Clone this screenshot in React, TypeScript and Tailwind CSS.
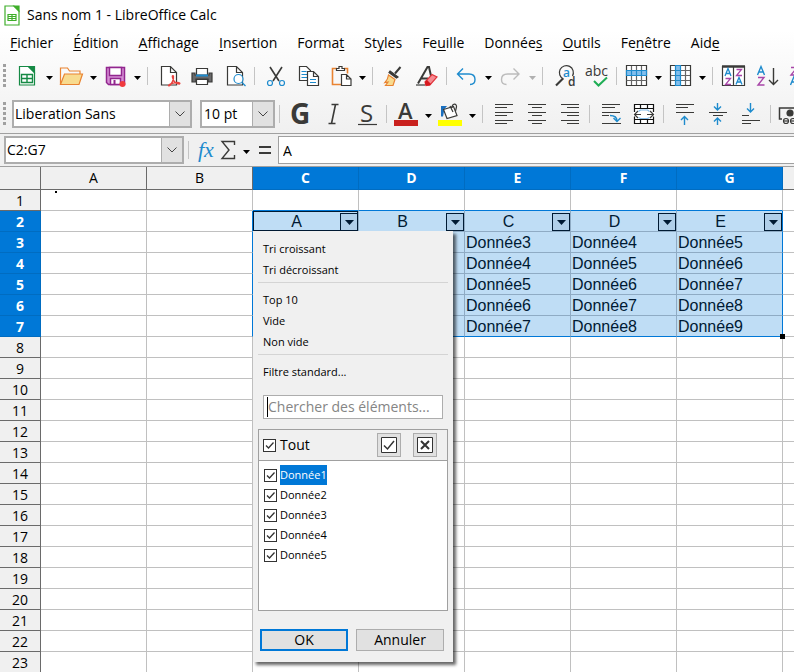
import React, { ReactNode, useState } from "react";

const COLUMNS = ["A", "B", "C", "D", "E", "F", "G"];
const ROWS = Array.from({ length: 23 }, (_, index) => index + 1);
const MENUS = [
  ["", "F", "ichier"],
  ["", "É", "dition"],
  ["", "A", "ffichage"],
  ["", "I", "nsertion"],
  ["Forma", "t", ""],
  ["St", "y", "les"],
  ["Fe", "u", "ille"],
  ["Donnée", "s", ""],
  ["", "O", "utils"],
  ["Fe", "n", "être"],
  ["Aid", "e", ""],
];

const DARK = "#3a3a38";
const BLUE = "#1e8bcd";

function Tool({ label, children }: { label: string; children: ReactNode }) {
  return (
    <button type="button" aria-label={label} className="w-[33px] h-6 shrink-0">
      <svg
        viewBox="0 0 33 24"
        className="block w-[33px] h-6 overflow-visible"
        fill="none"
        stroke={DARK}
        strokeWidth="1.2"
      >
        {children}
      </svg>
    </button>
  );
}

function Arrow({ label, disabled }: { label: string; disabled?: boolean }) {
  return (
    <button
      type="button"
      aria-label={label}
      disabled={disabled}
      className="w-[11px] h-6 shrink-0 flex items-center justify-center text-black disabled:text-[#b0b0b0]"
    >
      <svg viewBox="0 0 7 4" className="w-[7px] h-1 mt-1" fill="currentColor">
        <path d="M0 0h7L3.500 4z" />
      </svg>
    </button>
  );
}

function Separator() {
  return (
    <span className="w-2 shrink-0 flex justify-center">
      <span className="w-px h-[18px] bg-[#c4c4c4]" />
    </span>
  );
}

function Grip() {
  return (
    <span className="w-[3px] h-6 ml-[3px] shrink-0 bg-[repeating-linear-gradient(to_bottom,#a0a0a0_0_3px,transparent_3px_5px)]" />
  );
}

function Chevron() {
  return (
    <span className="w-[21px] shrink-0 bg-[#e1e1e1] border-l border-[#adadad] flex items-center justify-center pointer-events-none">
      <svg viewBox="0 0 10 6" className="w-2.5 h-1.5" fill="none" stroke="#444">
        <path d="M.5.5 5 5l4.500-4.500" />
      </svg>
    </span>
  );
}

function Page() {
  return <path d="M10.500 2.500h9l6 6v12.500h-15zM19.500 2.500v6h6" fill="#fff" />;
}

function StandardBar() {
  return (
    <div className="flex items-center h-[39px]">
      <Grip />
      <span className="w-[5px] shrink-0" />
      <Tool label="Nouveau">
        <g stroke="#168a45">
          <path d="M8.500 2.500h9l6 6v12.500h-15z" fill="#fff" />
          <path d="M17.500 2.500h6v6z" fill="#168a45" />
          <path d="M10.500 10.500h11v8h-11zM10.500 14.500h11M16 10.500v8" strokeWidth="1.400" />
        </g>
      </Tool>
      <Arrow label="Modèles" />
      <Tool label="Ouvrir">
        <path d="M5.500 20.500v-16.500h7l2 3h10.500v3" stroke="#e98331" />
        <path d="M9.500 10h18l-3.500 10.500h-18.500z" fill="#f8db8f" stroke="#e98331" />
      </Tool>
      <Arrow label="Fichiers récents" />
      <Tool label="Enregistrer">
        <g stroke="#92278f" strokeWidth="1.500">
          <path d="M7.500 3.500h18v17h-16l-2-2z" fill="#d58fd4" />
          <path d="M10.500 3.500h12v8h-12z" fill="#fff" />
          <path d="M11.500 20.500v-6h10v6z" fill="#fff" />
          <path d="M15.500 16v4.500" strokeWidth="2" />
        </g>
        <circle cx="23.500" cy="20" r="3" fill="#f03a3e" stroke="none" />
      </Tool>
      <Arrow label="Enregistrer sous" />
      <Separator />
      <Tool label="Exporter au format PDF">
        <Page />
        <path
          d="M18 22c3-2 5-7 4.500-10-1-1-1.500 0-1 1.500 1 4 3.500 6.500 7 6.500 1-.5 0-1.500-2-1.500-3 0-7 1-9 3z"
          stroke="#e8433f"
          strokeWidth="1.300"
        />
      </Tool>
      <Tool label="Imprimer">
        <path d="M12.500 11v-6.500h11v6.500" fill="#fff" />
        <path d="M8 9h3v2h14v-2h3v9h-4v-3h-12v3h-4z" fill="#69696a" stroke={DARK} />
        <path d="M12.500 15.500h11v5h-11z" fill="#fff" />
        <path d="M12 11.500h12" stroke={BLUE} strokeWidth="2" />
      </Tool>
      <Tool label="Aperçu avant impression">
        <Page />
        <circle cx="21.500" cy="15" r="4.500" fill="#fff" stroke={BLUE} />
        <path d="m25 18.500 3.500 3.500" stroke={BLUE} />
      </Tool>
      <Separator />
      <Tool label="Couper">
        <path d="m12 3 9 14M24 3l-9 14" strokeWidth="1.600" />
        <circle cx="12" cy="19" r="2.500" stroke={BLUE} />
        <circle cx="24" cy="19" r="2.500" stroke={BLUE} />
      </Tool>
      <Tool label="Copier">
        <path d="M8.500 2.500h7l4 4v10h-11z" fill="#fff" />
        <path d="M10.500 7.500h5M10.500 10.500h6M10.500 13.500h6" stroke={BLUE} />
        <path d="M16.500 7.500h6l5 5v9h-11zM22.500 7.500v5h5" fill="#fff" />
        <path d="M19 15.500h6M19 18.500h6" stroke={BLUE} />
      </Tool>
      <Tool label="Coller">
        <path d="M13 4.500h-4.500v16h9M20 4.500h3.500v5" stroke="#e98331" strokeWidth="1.600" />
        <path d="M12.500 6.500v-2h2.500v-2h3v2h2.500v2z" fill="#fff" />
        <path d="M17.500 10.500h5l4.500 4.500v6.500h-9.500zM22.500 10.500v4.500h4.500" fill="#fff" />
      </Tool>
      <Arrow label="Collage spécial" />
      <Separator />
      <Tool label="Cloner le formatage">
        <path d="m24.500 3-5.500 6.500" strokeWidth="2" />
        <path d="m14 7 8 6-1.500 1-7.500-5.500z" fill={DARK} />
        <path
          d="M12.500 11 19 15.500 17 21.500h-7.500l2.500-3.500-3 .5c2-2 3-4 3.500-7.500z"
          fill="#f8db8f"
          stroke="#e98331"
        />
      </Tool>
      <Tool label="Effacer le formatage direct">
        <path d="m9 19.500 9.500-16.500h1.500l2 9M12 14.500h7" strokeWidth="2" />
        <path d="M7 21h9" />
        <path d="m16 18 7-7.500 5 2.500-7 8-4 .500z" fill="#f58a91" stroke="#e0353c" />
        <path d="m16 18 2-2 4 4-1.500 1.500-4 0z" fill="#d7191f" stroke="none" />
      </Tool>
      <Separator />
      <Tool label="Annuler">
        <path d="M13 4.500 7.500 10l5.500 5.500M8 10h11c4 0 6 2.500 6 5.500s-2 5-5 5" stroke={BLUE} strokeWidth="1.400" />
      </Tool>
      <Arrow label="Liste d'annulation" />
      <Tool label="Rétablir">
        <path d="m19.500 4.500 5.500 5.500-5.500 5.500M24.500 10h-11c-4 0-6 2.500-6 5.500s2 5 5 5" stroke="#bcbcbc" strokeWidth="1.400" />
      </Tool>
      <Arrow label="Liste de rétablissement" disabled />
      <Separator />
      <Tool label="Rechercher et remplacer">
        <path d="M26.500 12a7 7 0 1 0-9 3" />
        <path d="m17 14.500-7 7" strokeWidth="2.200" />
        <text x="17" y="13" className="font-['Open_Sans',sans-serif] text-[12px] font-semibold" fill={BLUE} stroke="none">
          a
        </text>
        <text x="22" y="22" className="font-['Open_Sans',sans-serif] text-[12px] font-semibold" fill={DARK} stroke="none">
          d
        </text>
      </Tool>
      <Tool label="Orthographe">
        <text x="6" y="12" className="font-['Open_Sans',sans-serif] text-[14px]" fill={DARK} stroke="none">
          abc
        </text>
        <path d="m15 17 4.500 4.500 8.500-8" stroke="#1fae55" strokeWidth="2" />
      </Tool>
      <Separator />
      <Tool label="Ligne">
        <path d="M6.500 1.500h20v20h-20z" fill="#fff" />
        <path d="M6.500 16.500h20M11.500 2v19M16.500 2v19M21.500 2v19" stroke="#666" />
        <path d="M6.500 6.500h20v5h-20z" fill="#83beec" stroke={BLUE} />
        <path d="M11.500 7v4M16.500 7v4M21.500 7v4" stroke={BLUE} />
      </Tool>
      <Arrow label="Options de ligne" />
      <Tool label="Colonne">
        <path d="M6.500 1.500h20v20h-20z" fill="#fff" />
        <path d="M21.500 2v19M7 6.500h19M7 11.500h19M7 16.500h19" stroke="#666" />
        <path d="M11.500 1.500h5v20h-5z" fill="#83beec" stroke={BLUE} />
        <path d="M12 6.500h4M12 11.500h4M12 16.500h4" stroke={BLUE} />
      </Tool>
      <Arrow label="Options de colonne" />
      <Separator />
      <Tool label="Trier">
        <path d="M6.500 2.500h22v19h-22zM17.500 3v18" fill="#fff" />
        <path d="M6 2.500h23" strokeWidth="2.500" />
        <g strokeWidth="1.300">
          <path d="m9 12 3-7.500 3 7.500M10 9.500h4M20 20.500l3-7 3 7M21 18h4" stroke={BLUE} />
          <path d="M20.500 5.500h5l-5 6h5.500M9.500 14.500h5l-5 6h5.500" stroke="#a846a8" />
        </g>
      </Tool>
      <Tool label="Tri croissant">
        <path d="m8.500 11 3.500-8.500 3.500 8.500M9.500 8h5" stroke={BLUE} strokeWidth="1.400" />
        <path d="M9 13.500h6l-6 7.500h6.500" stroke="#a846a8" strokeWidth="1.400" />
        <path d="M24.500 4v16.500M20 16l4.500 4.500 4.500-4.500" strokeWidth="1.400" />
      </Tool>
      <Tool label="Tri décroissant">
        <path d="M9 3.500h6l-6 7.500h6.500" stroke="#a846a8" strokeWidth="1.400" />
        <path d="m8.500 21 3.500-8.500 3.500 8.500M9.500 18h5" stroke={BLUE} strokeWidth="1.400" />
      </Tool>
    </div>
  );
}

function FormattingBar() {
  return (
    <div className="flex items-center h-[39px] border-b border-[#a0a0a0]">
      <Grip />
      <label className="ml-1.5 w-[180px] h-7 shrink-0 flex border-2 border-[#adadad] bg-white">
        <select aria-label="Nom de police" className="appearance-none min-w-0 flex-1 pl-px text-sm outline-none">
          <option>Liberation Sans</option>
        </select>
        <Chevron />
      </label>
      <label className="ml-2 w-[75px] h-7 shrink-0 flex border-2 border-[#adadad] bg-white">
        <select aria-label="Taille de police" className="appearance-none min-w-0 flex-1 pl-0.5 text-sm outline-none">
          <option>10 pt</option>
        </select>
        <Chevron />
      </label>
      <Separator />
      <Tool label="Gras">
        <text x="7" y="22" className="font-['Open_Sans',sans-serif] text-[28px] font-bold" fill={DARK} stroke="none">
          G
        </text>
      </Tool>
      <Tool label="Italique">
        <path d="M15.500 2.500h7M12.500 21.500h7M19.500 2.500l-4 19" strokeWidth="1.600" />
      </Tool>
      <Tool label="Souligné">
        <text x="11" y="20" className="font-['Open_Sans',sans-serif] text-[24px]" fill={DARK} stroke="none">
          S
        </text>
        <path d="M9 22.500h19" />
      </Tool>
      <Separator />
      <Tool label="Couleur de police">
        <text x="8" y="17" className="font-['Open_Sans',sans-serif] text-[22px] font-semibold" fill={DARK} stroke="none">
          A
        </text>
        <path d="M4 18h24v6h-24z" fill="#c9211e" stroke="none" />
      </Tool>
      <Arrow label="Choisir la couleur de police" />
      <Tool label="Couleur d'arrière-plan">
        <path d="M7 14.500v-10.500h6l-2.500 3-1.500 7.500z" fill="#1a6fbf" stroke="none" />
        <path d="m9.500 7.500 10-3 3.500 9-10 3z" fill="#fff" />
        <path d="m16 4 3 6M18 6c0-5 5-5 4.500-1l-1 4" />
        <path d="M4 18h24v6h-24z" fill="#ffff00" stroke="none" />
      </Tool>
      <Arrow label="Choisir la couleur d'arrière-plan" />
      <Separator />
      <Tool label="Aligner à gauche">
        <path d="M9 2.500h18M9 5.500h12M9 10.500h18M9 13.500h12M9 18.500h18M9 21.500h12" />
      </Tool>
      <Tool label="Centrer horizontalement">
        <path d="M9 2.500h18M13 5.500h10M9 10.500h18M13 13.500h10M9 18.500h18M13 21.500h10" />
      </Tool>
      <Tool label="Aligner à droite">
        <path d="M9 2.500h18M15 5.500h12M9 10.500h18M15 13.500h12M9 18.500h18M15 21.500h12" />
      </Tool>
      <Separator />
      <Tool label="Renvoi à la ligne">
        <path d="M9 2.500h18M9 5.500h13M9 10.500h18M9 13.500h7M9 21.500h19" />
        <path d="M17 13.500c5 0 7 2 7 5.500M20.500 16l3.500 3.500 3.500-3.500" stroke={BLUE} strokeWidth="1.400" />
      </Tool>
      <Tool label="Fusionner et centrer les cellules">
        <path d="M8.500 2.500h19v19h-19zM8.500 6.500h19M8.500 17.500h19M14.500 2.500v4M21.500 2.500v4M14.500 17.500v4M21.500 17.500v4" fill="#fff" stroke="#111" />
        <path d="M7 10h22v4.500h-22z" fill="#fff" stroke="none" />
        <path d="M12 9l-3.500 3.500 3.500 3.500M24 9l3.500 3.500-3.500 3.500M9 12.500h6M21 12.500h6" />
        <path d="M12.500 9.500l2-1.500h7l2 1.500M12.500 15.500l2 1h7l2-1" stroke="#83beec" />
      </Tool>
      <Separator />
      <Tool label="Aligner en haut">
        <path d="M9 2.500h18M9 5.500h12M9 10.500h18" />
        <path d="M17.500 23v-8.500M14 18l3.500-3.500 3.500 3.500" stroke={BLUE} strokeWidth="1.400" />
      </Tool>
      <Tool label="Centrer verticalement">
        <path d="M9 10.500h18M13 13.500h10" />
        <path
          d="M17.500 1v7M14 4.500l3.500 3.500 3.500-3.500M17.500 23v-7M14 19.500l3.500-3.500 3.500 3.500"
          stroke={BLUE}
          strokeWidth="1.400"
        />
      </Tool>
      <Tool label="Aligner en bas">
        <path d="M9 13.500h7M9 18.500h18M9 21.500h9" />
        <path d="M17.500 1v9M14 6.500l3.500 3.500 3.500-3.500" stroke={BLUE} strokeWidth="1.400" />
      </Tool>
      <Separator />
      <Tool label="Formater comme monnaie">
        <path d="M8 17h-2.500v-11h22" strokeWidth="1.500" />
        <circle cx="16" cy="11" r="3" fill={DARK} />
        <circle cx="12" cy="19" r="2.500" />
        <path d="M9.500 19h5" />
        <circle cx="19" cy="19" r="2.500" />
        <path d="M16.500 19h5" />
      </Tool>
    </div>
  );
}

function FormulaBar() {
  return (
    <div className="flex items-center h-[33px] pl-1 bg-[#f0f0f0] border-b border-[#a0a0a0]">
      <label className="w-[180px] h-7 shrink-0 flex border-2 border-[#adadad] bg-white">
        <input
          aria-label="Zone de nom"
          defaultValue="C2:G7"
          className="min-w-0 flex-1 pl-px text-sm outline-none"
        />
        <Chevron />
      </label>
      <Separator />
      <button
        type="button"
        aria-label="Assistant Fonctions"
        className="w-6 shrink-0 pl-1.5 text-left font-['Liberation_Serif',serif] italic text-[22px] leading-6 text-[#1e8bcd]"
      >
        fx
      </button>
      <button type="button" aria-label="Sélectionner une fonction" className="w-[25px] shrink-0">
        <svg viewBox="0 0 24 24" className="block size-6" fill="none" stroke={DARK} strokeWidth="1.400">
          <path d="M18.500 7v-3.500h-12.500l7 8.500-7 8.500h12.500v-3.500" />
        </svg>
      </button>
      <Arrow label="Fonctions" />
      <button type="button" aria-label="Formule" className="w-[26px] shrink-0 flex justify-center">
        <svg viewBox="0 0 12 8" className="w-3 h-2" fill={DARK}>
          <path d="M0 0h12v2h-12zM0 6h12v2h-12z" />
        </svg>
      </button>
      <input
        aria-label="Ligne de saisie"
        defaultValue="A"
        className="min-w-0 flex-1 h-7 pl-1 border border-r-0 border-[#a0a0a0] bg-white text-sm outline-none"
      />
    </div>
  );
}

function CheckBox({ id }: { id: string }) {
  return (
    <span className="grid size-[13px] shrink-0">
      <input
        id={id}
        type="checkbox"
        defaultChecked
        className="peer col-start-1 row-start-1 appearance-none size-[13px] border border-[#333] bg-white"
      />
      <svg
        viewBox="0 0 13 13"
        className="col-start-1 row-start-1 size-[13px] pointer-events-none invisible peer-checked:visible"
        fill="none"
        stroke="#333"
        strokeWidth="1.300"
      >
        <path d="m3 6.500 2.500 2.500 5-5.500" />
      </svg>
    </span>
  );
}

function FilterPopup() {
  const [query, setQuery] = useState<string>("");
  const item = "block w-full h-[21px] pl-[5px] text-left text-[11px] leading-[21px]";

  return (
    <div className="absolute z-20 top-full left-0 w-[200px] px-[5px] pt-[7px] pb-[11px] bg-[#f0f0f0] text-black text-left font-normal font-['Open_Sans','Noto_Sans',sans-serif] shadow-[3px_3px_3px_rgba(0,0,0,0.6)]">
      <button type="button" className={item}>Tri croissant</button>
      <button type="button" className={item}>Tri décroissant</button>
      <hr className="mt-0.5 mb-1.5 border-[#d4d4d4]" />
      <button type="button" className={item}>Top 10</button>
      <button type="button" className={item}>Vide</button>
      <button type="button" className={item}>Non vide</button>
      <hr className="mt-0.5 mb-1.5 border-[#d4d4d4]" />
      <button type="button" className={item}>Filtre standard...</button>

      <div className="mx-[5px] mt-[13px] h-6 flex items-center pl-[3px] border border-[#adadad] bg-white">
        <span className="w-px h-5 bg-black" />
        <input
          aria-label="Chercher des éléments"
          placeholder="Chercher des éléments..."
          value={query}
          onChange={({ target: { value } }) => setQuery(value)}
          className="min-w-0 flex-1 text-sm outline-none placeholder:text-[#858585]"
        />
      </div>

      <div className="mt-2.5 border border-[#a0a0a0]">
        <div className="flex items-center h-[31px] pl-1 pr-2.5 border-b border-[#a0a0a0]">
          <CheckBox id="all" />
          <label htmlFor="all" className="flex-1 pl-1 text-sm leading-5">Tout</label>
          <button
            type="button"
            aria-label="Afficher uniquement l'élément actif"
            className="size-6 mr-3 flex items-center justify-center border border-[#adadad] bg-[#e1e1e1]"
          >
            <svg viewBox="0 0 16 16" className="size-4" fill="#fff" stroke="#333">
              <path d="M.5.5h15v15h-15z" />
              <path d="m3 8.500 3.500 3.500 6.500-8" fill="none" strokeWidth="1.500" />
            </svg>
          </button>
          <button
            type="button"
            aria-label="Masquer uniquement l'élément actif"
            className="size-6 flex items-center justify-center border border-[#adadad] bg-[#e1e1e1]"
          >
            <svg viewBox="0 0 16 16" className="size-4" fill="#fff" stroke="#333">
              <path d="M.5.5h15v15h-15z" />
              <path d="m4 4 8 8m0-8-8 8" strokeWidth="2" />
            </svg>
          </button>
        </div>
        <ul className="h-[149px] pt-1 pl-[5px] bg-white">
          {[1, 2, 3, 4, 5].map((value) => (
            <li key={value} className="flex items-center h-5">
              <CheckBox id={`value-${value}`} />
              <label
                htmlFor={`value-${value}`}
                className={
                  value == 1
                    ? "ml-[3px] text-[11px] leading-5 bg-[#0078d7] text-white"
                    : "ml-[3px] text-[11px] leading-5"
                }
              >
                Donnée{value}
              </label>
            </li>
          ))}
        </ul>
      </div>

      <div className="mt-[18px] px-0.5 flex gap-2">
        <button type="button" className="w-[88px] h-[22px] border-2 border-[#0078d7] bg-[#e1e1e1] text-sm leading-4">
          OK
        </button>
        <button type="button" className="w-[88px] h-[22px] border border-[#adadad] bg-[#e1e1e1] text-sm leading-4">
          Annuler
        </button>
      </div>
    </div>
  );
}

function FilterHeader({ title, active }: { title: string; active?: boolean }) {
  return (
    <div
      className={
        active
          ? "flex items-end h-5 shadow-[inset_0_0_0_1px_#001a33]"
          : "flex items-end h-5"
      }
    >
      <span className="flex-1 h-5 text-center leading-[22px]">{title}</span>
      <button
        type="button"
        aria-label={`Filtrer ${title}`}
        className="size-[18px] flex items-center justify-center border border-[#001a33] bg-[#b0cfe9]"
      >
        <svg viewBox="0 0 9 5" className="w-[9px] h-[5px]" fill="#001a33">
          <path d="M0 0h9L4.500 5z" />
        </svg>
      </button>
    </div>
  );
}

function getCellClass(row: number, col: number) {
  const inRows = row >= 2 && row <= 7;
  if (inRows && col >= 2) {
    const right = col == 6 ? "border-r-[#0078d7]" : "border-r-[#8fabc4]";
    const bottom = row == 7 ? "border-b-[#0078d7]" : "border-b-[#8fabc4]";
    return `relative p-0 align-top border-r border-b bg-[#bfddf5] text-[#001a33] ${right} ${bottom}`;
  }
  if (inRows && col == 1)
    return "p-0 align-top border-r border-b border-r-[#0078d7] border-b-[#c0c0c0]";
  if (row == 1 && col >= 2)
    return "p-0 align-top border-r border-b border-r-[#c0c0c0] border-b-[#0078d7]";
  return "p-0 align-top border-r border-b border-[#c0c0c0]";
}

function Cell({ row, col }: { row: number; col: number }) {
  const selected = row >= 2 && row <= 7 && col >= 2;

  return (
    <td className={getCellClass(row, col)}>
      {row == 1 && col == 0 && <span className="block size-0.5 ml-3.5 mt-px bg-black" />}
      {selected && row == 2 && (
        <FilterHeader title={COLUMNS[col - 2]} active={col == 2} />
      )}
      {/* C and D stay empty while the popup is open over them */}
      {selected && row > 2 && col > 3 && (
        <span className="block h-5 pl-px leading-[22px]">Donnée{row + col - 4}</span>
      )}
      {row == 2 && col == 2 && <FilterPopup />}
      {row == 7 && col == 6 && (
        <span className="absolute z-10 -right-[3px] -bottom-[3px] size-[5px] bg-black" />
      )}
    </td>
  );
}

function Sheet() {
  return (
    <table className="w-full table-fixed border-separate border-spacing-0 bg-white">
      <colgroup>
        <col className="w-[41px]" />
        {COLUMNS.map((name) => (
          <col key={name} className="w-[106px]" />
        ))}
        <col />
      </colgroup>
      <thead>
        <tr className="h-[23px] text-sm leading-5">
          <td className="p-0 bg-[#f0f0f0] border-r border-b border-[#6a6a6a]" />
          {COLUMNS.map((name, index) => (
            <th
              key={name}
              scope="col"
              className={
                index >= 2
                  ? "p-0 font-bold text-white bg-[#0078d7] border-r border-b border-[#006cc1]"
                  : "p-0 font-normal bg-[#f0f0f0] border-r border-b border-[#6a6a6a]"
              }
            >
              {name}
            </th>
          ))}
          <td className="p-0 bg-[#f0f0f0] border-b border-[#6a6a6a]" />
        </tr>
      </thead>
      <tbody className="font-['Liberation_Sans',Arial,sans-serif] text-base">
        {ROWS.map((row) => (
          <tr key={row} className="h-[21px]">
            <th
              scope="row"
              className={
                row >= 2 && row <= 7
                  ? "p-0 font-['Open_Sans','Noto_Sans',sans-serif] text-sm font-bold text-white bg-[#0078d7] border-r border-b border-[#006cc1]"
                  : "p-0 font-['Open_Sans','Noto_Sans',sans-serif] text-sm font-normal bg-[#f0f0f0] border-r border-b border-[#6a6a6a]"
              }
            >
              <span className="block h-5 leading-[22px]">{row}</span>
            </th>
            {COLUMNS.map((name, index) => (
              <Cell key={name} row={row} col={index} />
            ))}
            <td className="p-0 border-b border-[#c0c0c0]" />
          </tr>
        ))}
      </tbody>
    </table>
  );
}

function App() {
  return (
    <main className="h-screen overflow-hidden bg-white text-black font-['Open_Sans','Noto_Sans',sans-serif]">
      <header className="flex items-center gap-[7px] h-[30px] pl-1">
        <svg viewBox="0 0 16 21" className="w-4 h-[21px]" fill="#fff" stroke="#3fae2a" strokeWidth="1.200">
          <path d="M1 1h9l5 5v14h-14z" />
          <path d="M10 1h5v5z" fill="#3fae2a" />
          <path d="M4 9.500h8v6h-8zM4 11.500h8M4 13.500h8M8 9.500v6" />
        </svg>
        <h1 className="text-sm">Sans nom 1 - LibreOffice Calc</h1>
      </header>

      <div className="bg-linear-to-b from-white to-[#f0f0f0]">
        <nav className="flex items-center gap-5 h-[26px] pl-2.5 text-sm">
          {MENUS.map(([before, key, after]) => (
            <button key={before + key + after} type="button" className="shrink-0">
              {before}
              <span className="underline underline-offset-2">{key}</span>
              {after}
            </button>
          ))}
        </nav>
        <StandardBar />
        <FormattingBar />
      </div>
      <FormulaBar />
      <Sheet />
    </main>
  );
}

export default App;
